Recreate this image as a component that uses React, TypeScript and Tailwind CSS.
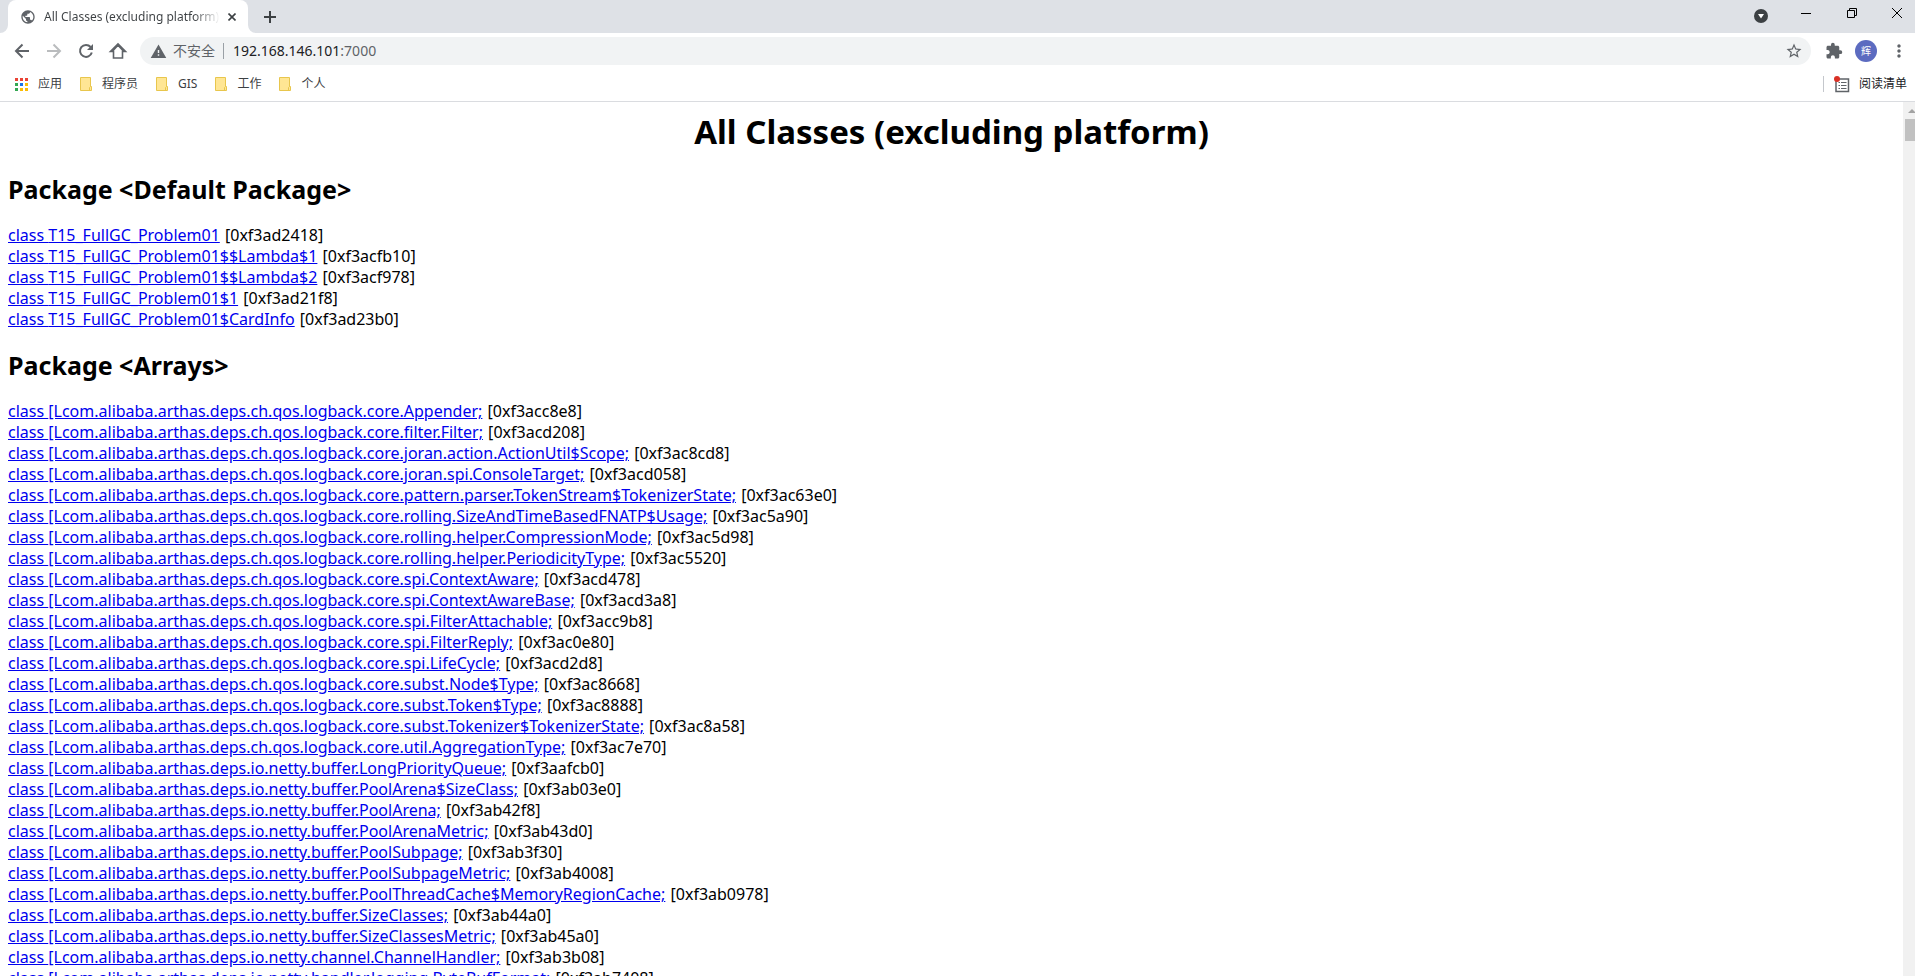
import type { ReactNode } from "react";
import { MdWarning, MdStarBorder, MdExtension, MdMoreVert, MdPublic } from "react-icons/md";

type Entry = [name: string, id: string];

const defaultPackage: Entry[] = [
  ["T15_FullGC_Problem01", "0xf3ad2418"],
  ["T15_FullGC_Problem01$$Lambda$1", "0xf3acfb10"],
  ["T15_FullGC_Problem01$$Lambda$2", "0xf3acf978"],
  ["T15_FullGC_Problem01$1", "0xf3ad21f8"],
  ["T15_FullGC_Problem01$CardInfo", "0xf3ad23b0"],
];

const arrays: Entry[] = [
  ["[Lcom.alibaba.arthas.deps.ch.qos.logback.core.Appender;", "0xf3acc8e8"],
  ["[Lcom.alibaba.arthas.deps.ch.qos.logback.core.filter.Filter;", "0xf3acd208"],
  ["[Lcom.alibaba.arthas.deps.ch.qos.logback.core.joran.action.ActionUtil$Scope;", "0xf3ac8cd8"],
  ["[Lcom.alibaba.arthas.deps.ch.qos.logback.core.joran.spi.ConsoleTarget;", "0xf3acd058"],
  ["[Lcom.alibaba.arthas.deps.ch.qos.logback.core.pattern.parser.TokenStream$TokenizerState;", "0xf3ac63e0"],
  ["[Lcom.alibaba.arthas.deps.ch.qos.logback.core.rolling.SizeAndTimeBasedFNATP$Usage;", "0xf3ac5a90"],
  ["[Lcom.alibaba.arthas.deps.ch.qos.logback.core.rolling.helper.CompressionMode;", "0xf3ac5d98"],
  ["[Lcom.alibaba.arthas.deps.ch.qos.logback.core.rolling.helper.PeriodicityType;", "0xf3ac5520"],
  ["[Lcom.alibaba.arthas.deps.ch.qos.logback.core.spi.ContextAware;", "0xf3acd478"],
  ["[Lcom.alibaba.arthas.deps.ch.qos.logback.core.spi.ContextAwareBase;", "0xf3acd3a8"],
  ["[Lcom.alibaba.arthas.deps.ch.qos.logback.core.spi.FilterAttachable;", "0xf3acc9b8"],
  ["[Lcom.alibaba.arthas.deps.ch.qos.logback.core.spi.FilterReply;", "0xf3ac0e80"],
  ["[Lcom.alibaba.arthas.deps.ch.qos.logback.core.spi.LifeCycle;", "0xf3acd2d8"],
  ["[Lcom.alibaba.arthas.deps.ch.qos.logback.core.subst.Node$Type;", "0xf3ac8668"],
  ["[Lcom.alibaba.arthas.deps.ch.qos.logback.core.subst.Token$Type;", "0xf3ac8888"],
  ["[Lcom.alibaba.arthas.deps.ch.qos.logback.core.subst.Tokenizer$TokenizerState;", "0xf3ac8a58"],
  ["[Lcom.alibaba.arthas.deps.ch.qos.logback.core.util.AggregationType;", "0xf3ac7e70"],
  ["[Lcom.alibaba.arthas.deps.io.netty.buffer.LongPriorityQueue;", "0xf3aafcb0"],
  ["[Lcom.alibaba.arthas.deps.io.netty.buffer.PoolArena$SizeClass;", "0xf3ab03e0"],
  ["[Lcom.alibaba.arthas.deps.io.netty.buffer.PoolArena;", "0xf3ab42f8"],
  ["[Lcom.alibaba.arthas.deps.io.netty.buffer.PoolArenaMetric;", "0xf3ab43d0"],
  ["[Lcom.alibaba.arthas.deps.io.netty.buffer.PoolSubpage;", "0xf3ab3f30"],
  ["[Lcom.alibaba.arthas.deps.io.netty.buffer.PoolSubpageMetric;", "0xf3ab4008"],
  ["[Lcom.alibaba.arthas.deps.io.netty.buffer.PoolThreadCache$MemoryRegionCache;", "0xf3ab0978"],
  ["[Lcom.alibaba.arthas.deps.io.netty.buffer.SizeClasses;", "0xf3ab44a0"],
  ["[Lcom.alibaba.arthas.deps.io.netty.buffer.SizeClassesMetric;", "0xf3ab45a0"],
  ["[Lcom.alibaba.arthas.deps.io.netty.channel.ChannelHandler;", "0xf3ab3b08"],
  ["[Lcom.alibaba.arthas.deps.io.netty.handler.logging.ByteBufFormat;", "0xf3ab7408"],
];

function ClassList({ title, items }: { title: string; items: Entry[] }) {
  return (
    <section>
      <h2 className="mt-[19px] mb-5 text-[25px] leading-8 font-bold">{title}</h2>
      <ul>
        {items.map(([name, id]) => (
          <li key={id} className="whitespace-nowrap">
            <a href={`#${id}`} className="mr-px text-[#0000ee] underline">class {name}</a> [{id}]
          </li>
        ))}
      </ul>
    </section>
  );
}

function LineIcon({ children }: { children: ReactNode }) {
  return (
    <svg width="20" height="20" viewBox="0 0 20 20" fill="none" stroke="currentColor" strokeWidth="2" aria-hidden="true">
      {children}
    </svg>
  );
}

function FolderIcon() {
  return (
    <svg width="12" height="14" viewBox="0 0 12 14" aria-hidden="true">
      <path d="M.5.5h10v9h1v4H.5z" fill="#ffe694" stroke="#e8c64d" />
      <path d="M9.5 13.5v-3l1-1" fill="none" stroke="#e8c64d" />
    </svg>
  );
}

const appColors = ["#ea4335", "#ea4335", "#ea4335", "#34a853", "#1a73e8", "#fbbc04", "#34a853", "#fbbc04", "#fbbc04"];

function AppsIcon() {
  return (
    <svg width="13" height="13" viewBox="0 0 13 13" aria-hidden="true" shapeRendering="crispEdges">
      {appColors.map((c, i) => (
        <rect key={i} x={(i % 3) * 5} y={Math.floor(i / 3) * 5} width="3" height="3" fill={c} />
      ))}
    </svg>
  );
}

function TabStrip() {
  return (
    <div className="flex h-[33px] items-end bg-[#dee1e6]">
      <svg width="8" height="8" viewBox="0 0 8 8" aria-hidden="true"><path d="M8 0v8H0a8 8 0 0 0 8-8z" fill="#fff" /></svg>
      <div className="flex h-[33px] w-60 items-center rounded-t-lg bg-white pr-2 pl-3">
        <MdPublic className="size-4 shrink-0 text-[#5f6368]" />
        <span className="ml-2 flex-1 overflow-hidden bg-gradient-to-r from-[#3c4043] from-85% to-transparent bg-clip-text text-xs whitespace-nowrap text-transparent">
          All Classes (excluding platform)
        </span>
        <button aria-label="Close tab" className="ml-1 flex size-4 items-center justify-center text-[#3c4043]">
          <svg width="8" height="8" viewBox="0 0 8 8"><path d="M.5.5l7 7M7.500.5l-7 7" stroke="currentColor" strokeWidth="1.600" /></svg>
        </button>
      </div>
      <svg width="8" height="8" viewBox="0 0 8 8" aria-hidden="true"><path d="M0 0v8h8a8 8 0 0 1-8-8z" fill="#fff" /></svg>
      <button aria-label="New tab" className="flex h-8 w-7 items-center justify-center text-[#3c4043]">
        <svg width="12" height="12" viewBox="0 0 12 12"><path d="M6 0v12M0 6h12" stroke="currentColor" strokeWidth="2" /></svg>
      </button>
      <div className="ml-auto flex h-[33px] items-start">
        <button aria-label="Search tabs" className="flex h-8 w-7 items-center justify-center">
          <svg width="14" height="14" viewBox="0 0 14 14"><circle cx="7" cy="7" r="7" fill="#3c4043" /><path d="M4 5h6L7 9.500z" fill="#fff" /></svg>
        </button>
        <button aria-label="Minimize" className="ml-2 flex h-[26px] w-[46px] items-center justify-center">
          <svg width="10" height="10" viewBox="0 0 10 10"><path d="M0 5.500h10" stroke="#000" /></svg>
        </button>
        <button aria-label="Restore" className="flex h-[26px] w-[46px] items-center justify-center">
          <svg width="10" height="10" viewBox="0 0 10 10" fill="none" stroke="#000"><path d="M.5 2.500h7v7h-7zM2.500 2.500v-2h7v7h-2" /></svg>
        </button>
        <button aria-label="Close" className="flex h-[26px] w-10 items-center justify-center pl-1">
          <svg width="10" height="10" viewBox="0 0 10 10"><path d="M0 0l10 10M10 0L0 10" stroke="#000" /></svg>
        </button>
      </div>
    </div>
  );
}

function Toolbar() {
  return (
    <div className="flex h-9 items-center pr-1.5 pl-3 text-[#5f6368]">
      <div className="flex gap-3">
        <button aria-label="Back"><LineIcon><path d="M17 10H4.500M10.500 3.500L4 10l6.500 6.500" /></LineIcon></button>
        <button aria-label="Forward" className="text-[#babcbe]"><LineIcon><path d="M3 10h12.500M9.500 3.500L16 10l-6.500 6.500" /></LineIcon></button>
        <button aria-label="Reload">
          <LineIcon>
            <path d="M14.600 6A6 6 0 1 0 15.800 11.500" />
            <path d="M17 3v6h-6z" fill="currentColor" stroke="none" />
          </LineIcon>
        </button>
        <button aria-label="Home"><LineIcon><path d="M4.200 10.500L10 4.200l5.800 6.300H14.500V17h-9v-6.500H2.500L10 3l7.500 7.500h-3" strokeWidth="1.600" /></LineIcon></button>
      </div>
      <div className="ml-3 flex h-7 flex-1 items-center rounded-full bg-[#f1f3f4] pr-2">
        <MdWarning size={17} className="ml-2.5" />
        <span className="ml-1.5 text-sm">不安全</span>
        <span className="mr-[9px] ml-2 h-4 w-px bg-[#9aa0a6]" />
        <div className="text-sm"><span className="text-[#202124]">192.168.146.101</span>:7000</div>
        <button aria-label="Bookmark this page" className="ml-auto"><MdStarBorder size={18} /></button>
      </div>
      <button aria-label="Extensions" className="ml-3.5"><MdExtension size={18} /></button>
      <button aria-label="Profile" className="ml-3 flex size-[22px] items-center justify-center rounded-full bg-[#5c6bc0] text-[10px] text-white">辉</button>
      <button aria-label="Menu" className="ml-3"><MdMoreVert size={20} /></button>
    </div>
  );
}

function Bookmarks() {
  return (
    <nav className="flex h-[33px] items-center border-b border-[#dadce0] pr-2 pb-0.5 pl-[15px] text-xs text-[#3c4043]">
      <a href="#apps" className="flex items-center gap-[10px]"><AppsIcon />应用</a>
      <div className="ml-[18px] flex gap-[18px]">
        {["程序员", "GIS", "工作", "个人"].map((label) => (
          <a key={label} href={`#${label}`} className="flex items-center gap-[10px]"><FolderIcon />{label}</a>
        ))}
      </div>
      <span className="ml-auto h-4 w-px bg-[#c4c7cc]" />
      <button className="ml-[10px] flex items-center gap-[9px] text-[#202124]">
        <svg width="16" height="17" viewBox="0 0 16 17" fill="none" aria-hidden="true">
          <path d="M2 3h12.500v12.500H2z" stroke="#5f6368" strokeWidth="1.500" />
          <path d="M4.500 6.500h1.500m1 0h5.500M4.500 9.500h1.500m1 0h5.500M4.500 12.500h1.500m1 0h5.500" stroke="#5f6368" strokeWidth="1.200" />
          <circle cx="3" cy="3" r="3" fill="#d93025" />
        </svg>
        阅读清单
      </button>
    </nav>
  );
}

export default function App() {
  return (
    <div className="flex h-screen flex-col overflow-hidden bg-white font-['Noto_Sans','Noto_Sans_CJK_SC',sans-serif]">
      <TabStrip />
      <Toolbar />
      <Bookmarks />
      <div className="flex min-h-0 flex-1">
        <main className="flex-1 overflow-hidden px-2 pt-2 text-base leading-[21px] text-black">
          <h1 className="mb-5 text-center text-[33px] leading-[43px] font-bold">All Classes (excluding platform)</h1>
          <ClassList title="Package <Default Package>" items={defaultPackage} />
          <ClassList title="Package <Arrays>" items={arrays} />
        </main>
        <div className="flex w-3 flex-col overflow-hidden bg-[#f1f1f1] pl-0.5" aria-hidden="true">
          <svg width="13" height="17" viewBox="0 0 13 17"><path d="M3 11l4-4 4 4z" fill="#a3a3a3" /></svg>
          <div className="h-[22px] bg-[#c1c1c1]" />
        </div>
      </div>
    </div>
  );
}
